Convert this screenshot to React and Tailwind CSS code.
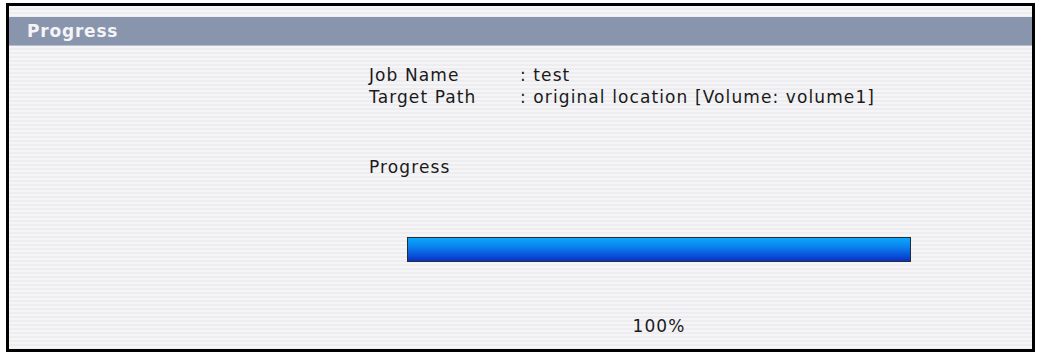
export default function App() {
  return (
    <div className="w-[1037px] h-[354px] bg-white pt-[3px] pl-[6px]" style={{ fontFamily: '"DejaVu Sans", Verdana, sans-serif' }}>
      <div className="w-[1029px] h-[349px] border-[3px] border-black flex flex-col bg-[image:repeating-linear-gradient(to_bottom,#f5f5f7_0px,#f5f5f7_2px,#ededf0_2px,#ededf0_4px)]">
        <div className="h-[11px]" />
        <div className="h-[29px] bg-[#8995ad] border-b border-[#b8c0d0] flex items-center pl-[18px]">
          <span className="text-[17px] font-bold tracking-[0.8px] text-[#f4f4f6] leading-[29px]">Progress</span>
        </div>
        <div className="ml-[360px] w-[580px] flex flex-col text-[17px] tracking-[1.1px] text-[#1a1a1a]">
          <div className="mt-[18px] flex leading-[22px]">
            <div className="w-[151px]">Job Name</div>
            <div>: test</div>
          </div>
          <div className="flex leading-[22px]">
            <div className="w-[151px]">Target Path</div>
            <div>: original location [Volume: volume1]</div>
          </div>
          <div className="mt-[48px] leading-[22px]">Progress</div>
          <div className="mt-[59px] flex justify-center">
            <div className="w-[504px] h-[25px] border border-[#232d36] bg-[linear-gradient(to_bottom,#0aa8fa_0%,#0a80ee_40%,#0a52da_75%,#0a30c2_100%)]" />
          </div>
          <div className="mt-[53px] leading-[22px] text-center">100%</div>
        </div>
      </div>
    </div>
  );
}
